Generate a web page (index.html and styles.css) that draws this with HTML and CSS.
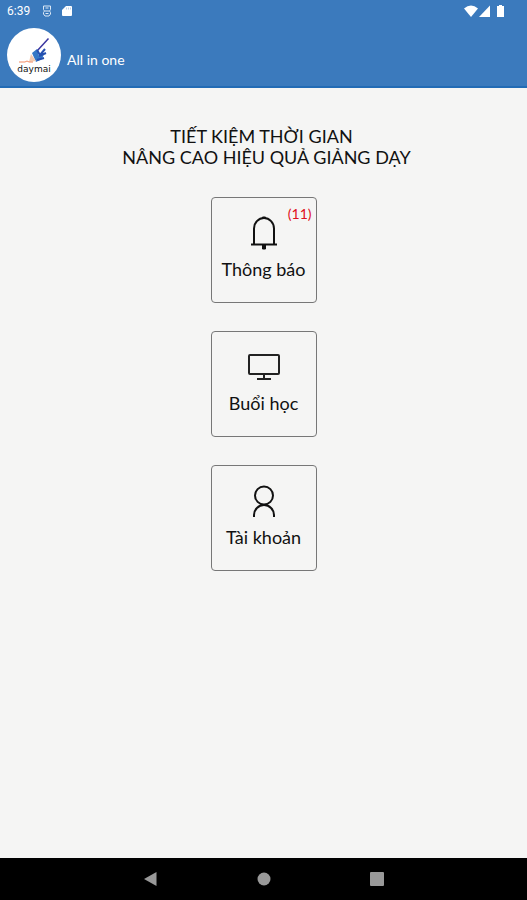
FILE: index.html
```html
<!DOCTYPE html>
<html lang="vi">
<head>
<meta charset="utf-8">
<meta name="viewport" content="width=device-width, initial-scale=1">
<title>All in one</title>
<link rel="stylesheet" href="styles.css">
</head>
<body>
<header class="top">
  <div class="status">
    <span class="time">6:39</span>
    <svg width="10" height="12" viewBox="0 0 10 12" fill="none" stroke="#dbe8f6" stroke-width="1"><path d="M1.500 1h7v3.500l-1 1.500 1 1.500V9L7 11H3L1.500 9V7.500L2.500 6l-1-1.500zM3.500 3h3M3 6h4M3.500 8.500h3"/></svg>
    <svg class="card-icon" width="10" height="12" viewBox="0 0 10 12" fill="#fff"><path d="M4 1h5q1 0 1 1v8q0 1-1 1H1q-1 0-1-1V5z"/><path d="M4.500 2.500v2M6.500 2.500v2M8.500 2.500v2" stroke="#bcd2ec" stroke-width="1"/></svg>
    <svg class="signals" width="40" height="14" viewBox="0 0 40 14" fill="#fff"><path d="M0 4.500Q7-1.500 14 4.500L7 13z"/><path d="M26 1.500V13H15z"/><path d="M33 2h2V1h3v1h2v11h-7z"/></svg>
  </div>
  <div class="brand">
    <div class="logo">
      <svg width="34" height="27" viewBox="0 0 34 27" fill="none">
        <path d="M31.500 1.500 20 14" stroke="#3a35a0" stroke-width="1.500"/>
        <path d="m15 16 5-4 2 7 5-2-2 5-6 3z" fill="#3477c5"/>
        <path d="m20 13 3 5 5-6M22 19l7-3M20 23l7-2" stroke="#2450b0" stroke-width="2"/>
        <path d="m14 17-2 8 7-1z" fill="#f3c9ae"/>
        <path d="M2 25h6l2-1 2 1h4" stroke="#f28b62" stroke-width="1"/>
      </svg>
      <span class="logo-name">daymai</span>
    </div>
    <span class="app-name">All in one</span>
  </div>
</header>
<main class="content">
  <h1 class="title"><span class="line first">TIẾT KIỆM THỜI GIAN</span> <span class="line">NÂNG CAO HIỆU QUẢ GIẢNG DẠY</span></h1>
  <div class="tiles">
    <button class="tile" type="button">
      <svg width="36" height="36" viewBox="0 0 36 36" fill="none" stroke="#111" stroke-width="2"><path d="M8 29V13.500a10 10.500 0 0 1 20 0V29"/><path d="M5 29.500h26"/><path d="M16.500 3.500V2h3v1.500M16.500 30v4h3v-4z" fill="#111" stroke-width="1"/></svg>
      <span>Thông báo</span>
      <span class="badge">(11)</span>
    </button>
    <button class="tile" type="button">
      <svg width="36" height="36" viewBox="0 0 36 36" fill="none" stroke="#222" stroke-width="2"><rect x="3" y="6" width="30" height="19" rx="1"/><path d="M18 25v5M11 30h14"/></svg>
      <span>Buổi học</span>
    </button>
    <button class="tile" type="button">
      <svg width="36" height="36" viewBox="0 0 36 36" fill="none" stroke="#111" stroke-width="2"><circle cx="18" cy="12.500" r="9"/><path d="M8 34v-2a10 10 0 0 1 20 0v2"/></svg>
      <span>Tài khoản</span>
    </button>
  </div>
</main>
<nav class="nav">
  <button type="button" aria-label="Back"><svg width="14" height="14" viewBox="0 0 14 14" fill="#999"><path d="M0 7 12.500 0v14z"/></svg></button>
  <button type="button" aria-label="Home"><svg width="14" height="14" viewBox="0 0 14 14" fill="#999"><circle cx="7" cy="7" r="6.500"/></svg></button>
  <button type="button" aria-label="Recent"><svg width="14" height="14" viewBox="0 0 14 14" fill="#999"><rect width="14" height="14" rx="1"/></svg></button>
</nav>
</body>
</html>
```
FILE: styles.css
```css
* { box-sizing: border-box; }
body {
  margin: 0;
  min-height: 100vh;
  display: flex;
  flex-direction: column;
  background: #f5f5f4;
  color: #111;
  font-family: Lato, "Noto Sans", sans-serif;
}
button { font: inherit; color: inherit; background: none; border: 0; padding: 0; cursor: pointer; }
svg { display: block; flex: none; }
.top {
  background: #3b7abd;
  color: #fff;
  border-bottom: 2px solid #226bb5;
  padding-bottom: 4px;
}
.status {
  display: flex;
  align-items: center;
  height: 22px;
  padding: 0 23px 0 7px;
}
.time { font: 12px/22px Roboto, sans-serif; width: 35px; }
.card-icon { margin-left: 10px; }
.signals { margin-left: auto; }
.brand { display: flex; align-items: center; gap: 6px; padding: 6px 7px 0; }
.logo {
  width: 54px;
  height: 54px;
  border-radius: 50%;
  background: #fff;
  display: flex;
  flex-direction: column;
  align-items: center;
  padding-top: 9px;
}
.logo-name { font: 9px/10px "DejaVu Sans", sans-serif; color: #111; }
.app-name { font-size: 14px; line-height: 20px; padding-top: 10px; }
.content {
  flex: 1;
  display: flex;
  flex-direction: column;
  align-items: center;
  padding-top: 38px;
}
.title {
  margin: 0 0 29px;
  font-size: 18px;
  font-weight: 400;
  line-height: 21px;
  text-align: center;
}
.line { display: block; padding-left: 6px; }
.first { padding: 0 4px 0 0; }
.tiles { display: grid; gap: 28px; }
.tile {
  position: relative;
  display: flex;
  flex-direction: column;
  align-items: center;
  gap: 6px;
  width: 106px;
  height: 106px;
  padding-top: 17px;
  border: 1px solid #777;
  border-radius: 4px;
  font-size: 18px;
  line-height: 24px;
  white-space: nowrap;
}
.badge {
  position: absolute;
  top: 6px;
  right: 4px;
  font-size: 14px;
  line-height: 20px;
  color: #e01020;
}
.nav {
  display: flex;
  justify-content: center;
  align-items: center;
  gap: 99px;
  height: 42px;
  background: #000;
}
```
